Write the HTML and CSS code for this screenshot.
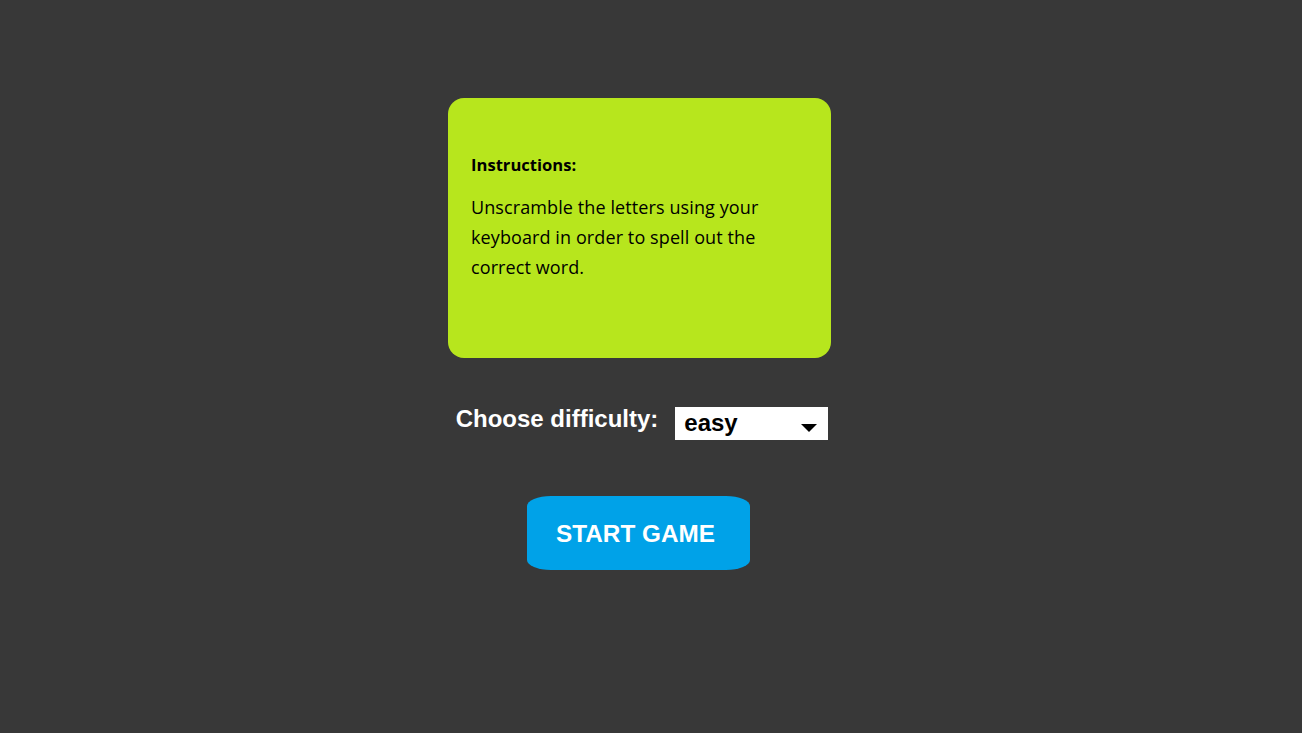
FILE: index.html
```html
<!DOCTYPE html>
<html lang="en">
<head>
<meta charset="utf-8">
<title>Word Scramble</title>
<link rel="stylesheet" href="styles.css">
</head>
<body>
<main class="page">
  <section class="card">
    <h2 class="card-title">Instructions:</h2>
    <p class="card-text">Unscramble the letters using your keyboard in order to spell out the correct word.</p>
  </section>
  <div class="difficulty">
    <label class="difficulty-label" for="level">Choose difficulty:</label>
    <div class="select" id="level">
      <span class="select-value">easy</span>
      <span class="select-arrow"></span>
    </div>
  </div>
  <button class="start">START GAME</button>
</main>
</body>
</html>
```

FILE: styles.css
```css
html, body {
  margin: 0;
  height: 100%;
  background: #383838;
}
.page {
  display: flex;
  flex-direction: column;
  align-items: center;
  padding: 98px 23px 0 0;
}
.card {
  box-sizing: border-box;
  width: 383px;
  height: 260px;
  background: #b7e61d;
  border-radius: 16px;
  padding: 54px 23px 0 23px;
  font-family: "Open Sans", sans-serif;
  color: #000;
}
.card-title {
  margin: 0;
  font-size: 16.6px;
  font-weight: 700;
  line-height: 24px;
  padding-top: 1px;
}
.card-text {
  margin: 15px 0 0 0;
  max-width: 310px;
  font-size: 18px;
  letter-spacing: 0.1px;
  line-height: 30px;
}
.difficulty {
  display: flex;
  align-items: center;
  gap: 17px;
  margin-top: 49px;
  margin-left: 5px;
  font-family: "Liberation Sans", Arial, sans-serif;
  font-weight: 700;
}
.difficulty-label {
  color: #fff;
  font-size: 24px;
  margin-top: -9px;
}
.select {
  box-sizing: border-box;
  width: 153px;
  height: 33px;
  background: #fff;
  display: flex;
  align-items: center;
  justify-content: space-between;
  padding: 0 11px 0 9px;
}
.select-value {
  font-size: 24px;
  color: #000;
  margin-top: -1px;
}
.select-arrow {
  width: 0;
  height: 0;
  border-left: 8px solid transparent;
  border-right: 8px solid transparent;
  border-top: 8px solid #000;
  margin-top: 8px;
}
.start {
  margin-top: 56px;
  width: 223px;
  height: 74px;
  border: none;
  border-radius: 24px / 10px;
  background: #00a2e8;
  color: #fff;
  font-family: "Liberation Sans", Arial, sans-serif;
  font-weight: 700;
  font-size: 24.3px;
  padding: 1px 6px 0 0;
  margin-right: 2px;
}
```
